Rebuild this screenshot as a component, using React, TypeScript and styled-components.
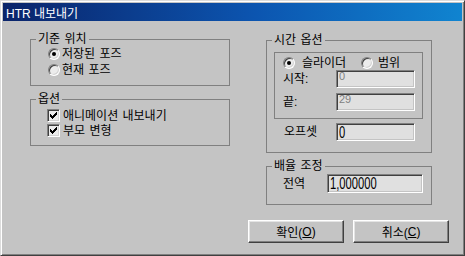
import styled, { createGlobalStyle } from "styled-components";

const FACE = "#c4c4c4";

const GlobalStyle = createGlobalStyle`
  html, body {
    margin: 0;
    padding: 0;
    background: ${FACE};
  }
  body {
    font-family: "Liberation Sans", "Noto Sans CJK KR", sans-serif;
    font-size: 12px;
    color: #000;
  }
  * {
    box-sizing: border-box;
  }
`;

export default function App() {
  return (
    <>
      <GlobalStyle />
      <Window>
        <TitleBar>HTR 내보내기</TitleBar>
        <Body>
          <TopRow>
            <Column $width={200} $top={18}>
              <GroupBox $padding="6px 0 7px 17px">
                <Legend>기준 위치</Legend>
                <OptionRow $height={16} $gap={2}>
                  <Radio $checked />
                  <Label>저장된 포즈</Label>
                </OptionRow>
                <OptionRow $height={16} $gap={2}>
                  <Radio />
                  <Label>현재 포즈</Label>
                </OptionRow>
              </GroupBox>
              <GroupBox $padding="8px 0 7px 16px">
                <Legend>옵션</Legend>
                <OptionRow $height={15} $gap={3}>
                  <CheckBox>
                    <CheckMark />
                  </CheckBox>
                  <Label>애니메이션 내보내기</Label>
                </OptionRow>
                <OptionRow $height={15} $gap={3}>
                  <CheckBox>
                    <CheckMark />
                  </CheckBox>
                  <Label>부모 변형</Label>
                </OptionRow>
              </GroupBox>
            </Column>

            <Column $width={166} $top={19}>
              <GroupBox $padding="11px 8px 11px 7px">
                <Legend>시간 옵션</Legend>
                <InnerFrame>
                  <RadioLine>
                    <OptionRow $height={15} $gap={7} $width={78}>
                      <Radio $checked />
                      <Label>슬라이더</Label>
                    </OptionRow>
                    <OptionRow $height={15} $gap={5}>
                      <Radio />
                      <Label>범위</Label>
                    </OptionRow>
                  </RadioLine>
                  <FieldStack>
                    <FieldRow $labelWidth={53}>
                      <Label>시작:</Label>
                      <Field $width={79} $height={18}>
                        <DisabledValue>0</DisabledValue>
                      </Field>
                    </FieldRow>
                    <FieldRow $labelWidth={53}>
                      <Label>끝:</Label>
                      <Field $width={79} $height={18}>
                        <DisabledValue>29</DisabledValue>
                      </Field>
                    </FieldRow>
                  </FieldStack>
                </InnerFrame>
                <FieldRow $labelWidth={52} $indent={10} $top={4}>
                  <Label>오프셋</Label>
                  <Field $width={79} $height={18}>
                    <Value>0</Value>
                  </Field>
                </FieldRow>
              </GroupBox>
              <GroupBox $padding="7px 0 11px 16px">
                <Legend>배율 조정</Legend>
                <FieldRow $labelWidth={44}>
                  <Label>전역</Label>
                  <Field $width={96} $height={19}>
                    <Value>1,000000</Value>
                  </Field>
                </FieldRow>
              </GroupBox>
            </Column>
          </TopRow>

          <ButtonRow>
            <Button>
              확인(<Mnemonic>O</Mnemonic>)
            </Button>
            <Button>
              취소(<Mnemonic>C</Mnemonic>)
            </Button>
          </ButtonRow>
        </Body>
      </Window>
    </>
  );
}

function CheckMark() {
  return (
    <svg width="7" height="7" viewBox="0 0 7 7" shapeRendering="crispEdges">
      <polygon
        points="0,2 1,2 1,3 2,3 2,4 3,4 3,3 4,3 4,2 5,2 5,1 6,1 6,0 7,0 7,3 6,3 6,4 5,4 5,5 4,5 4,6 3,6 3,7 2,7 2,6 1,6 1,5 0,5"
        fill="#000"
      />
    </svg>
  );
}

const Window = styled.div`
  width: 465px;
  height: 256px;
  padding: 2px;
  border: 1px solid;
  border-color: #dcdcdc #404040 #404040 #dcdcdc;
  box-shadow: inset 1px 1px #ffffff, inset -1px -1px #808080;
  background: ${FACE};
  display: flex;
  flex-direction: column;
`;

const TitleBar = styled.div`
  height: 18px;
  flex: none;
  display: flex;
  align-items: center;
  padding-left: 3px;
  color: #fff;
  font-size: 12px;
  background: linear-gradient(90deg, #0a246a 0%, #0c55b0 55%, #1084d0 100%);
  white-space: nowrap;
`;

const Body = styled.div`
  display: flex;
  flex-direction: column;
  padding: 0 13px 0 27px;
`;

const TopRow = styled.div`
  display: flex;
  align-items: flex-start;
  gap: 36px;
`;

const Column = styled.div<{ $width: number; $top: number }>`
  width: ${(p) => p.$width}px;
  margin-top: ${(p) => p.$top}px;
  display: flex;
  flex-direction: column;
  gap: 13px;
`;

const GroupBox = styled.div<{ $padding: string }>`
  position: relative;
  border: 1px solid #808080;
  padding: ${(p) => p.$padding};
  display: flex;
  flex-direction: column;
`;

const Legend = styled.span`
  position: absolute;
  top: -8px;
  left: 5px;
  padding: 0 2px;
  line-height: 14px;
  word-spacing: 1px;
  background: ${FACE};
  white-space: nowrap;
`;

const InnerFrame = styled.div`
  border: 1px solid #808080;
  padding: 2px 7px 7px 8px;
  display: flex;
  flex-direction: column;
`;

const RadioLine = styled.div`
  display: flex;
`;

const FieldStack = styled.div`
  display: flex;
  flex-direction: column;
  gap: 5px;
`;

const OptionRow = styled.div<{ $height: number; $gap: number; $width?: number }>`
  display: flex;
  align-items: center;
  height: ${(p) => p.$height}px;
  gap: ${(p) => p.$gap}px;
  ${(p) => (p.$width ? `width: ${p.$width}px; flex: none;` : "")}
`;

const Label = styled.span`
  line-height: 14px;
  word-spacing: 1px;
  white-space: nowrap;
`;

const Radio = styled.span<{ $checked?: boolean }>`
  position: relative;
  flex: none;
  width: 12px;
  height: 12px;
  border-radius: 50%;
  border: 1px solid;
  border-color: #808080 #ffffff #ffffff #808080;
  background: #ececec;
  box-shadow: inset 1px 1px #404040, inset -1px -1px #d4d4d4;

  &::after {
    content: "";
    display: ${(p) => (p.$checked ? "block" : "none")};
    position: absolute;
    left: 3px;
    top: 3px;
    width: 4px;
    height: 4px;
    border-radius: 50%;
    background: #000;
  }
`;

const CheckBox = styled.span`
  flex: none;
  width: 13px;
  height: 13px;
  border: 1px solid;
  border-color: #808080 #ffffff #ffffff #808080;
  background: #ececec;
  box-shadow: inset 1px 1px #404040, inset -1px -1px #d4d4d4;
  display: flex;
  align-items: center;
  justify-content: center;
`;

const FieldRow = styled.div<{ $labelWidth: number; $indent?: number; $top?: number }>`
  display: grid;
  grid-template-columns: ${(p) => p.$labelWidth}px auto;
  align-items: center;
  padding-left: ${(p) => p.$indent ?? 0}px;
  margin-top: ${(p) => p.$top ?? 0}px;
`;

const Field = styled.div<{ $width: number; $height: number }>`
  width: ${(p) => p.$width}px;
  height: ${(p) => p.$height}px;
  border: 1px solid;
  border-color: #808080 #ffffff #ffffff #808080;
  box-shadow: inset 1px 1px #404040, inset -1px -1px ${FACE};
  background: #e0e0e0;
  padding: 0 2px;
  display: flex;
  align-items: center;
  overflow: hidden;
`;

const DisabledValue = styled.span`
  align-self: flex-start;
  font-family: "Liberation Sans", sans-serif;
  font-size: 11px;
  line-height: 11px;
  color: #808080;
`;

const Value = styled.span`
  display: inline-block;
  font-family: "Liberation Sans", sans-serif;
  font-size: 16px;
  line-height: 13px;
  transform: scaleX(0.7);
  transform-origin: left center;
  white-space: nowrap;
`;

const ButtonRow = styled.div`
  display: flex;
  justify-content: flex-end;
  gap: 9px;
  margin-top: 15px;
`;

const Button = styled.button`
  width: 96px;
  height: 23px;
  margin: 0;
  padding: 0;
  font: inherit;
  color: #000;
  background: ${FACE};
  border: 1px solid;
  border-color: #ffffff #404040 #404040 #ffffff;
  box-shadow: inset -1px -1px #808080, inset 1px 1px #e4e4e4;
  display: flex;
  align-items: center;
  justify-content: center;
`;

const Mnemonic = styled.span`
  text-decoration: underline;
`;
